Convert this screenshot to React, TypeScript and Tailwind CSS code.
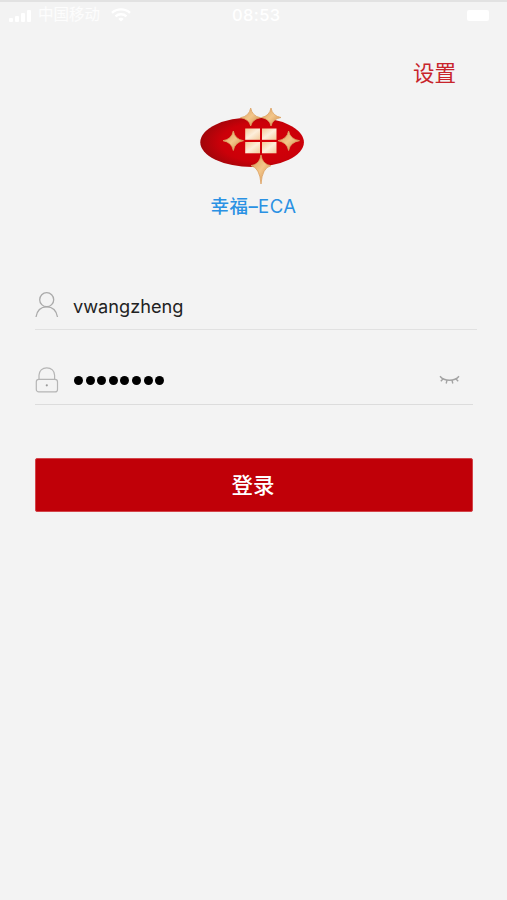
import { useState } from "react";

const signalBars = [
  { id: 1, x: 0, h: 4 },
  { id: 2, x: 6, h: 6 },
  { id: 3, x: 12, h: 9 },
  { id: 4, x: 18, h: 12 },
];

const stars = [
  { id: 1, d: "M50.7 1 Q52.2 9.2 60.5 10.7 Q52.2 12.2 50.7 19 Q49.2 12.2 40.5 10.7 Q49.2 9.2 50.7 1Z" },
  { id: 2, d: "M71 1 Q72.5 9 81 10.5 Q72.5 12 71 19 Q69.5 12 61.5 10.5 Q69.5 9 71 1Z" },
  { id: 3, d: "M33.3 24 Q34.9 32.2 43.5 33.7 Q34.9 35.2 33.3 43.5 Q31.7 35.2 23 33.7 Q31.7 32.2 33.3 24Z" },
  { id: 4, d: "M88.6 24 Q90.2 32.2 99.5 33.7 Q90.2 35.2 88.6 43.5 Q87 35.2 78 33.7 Q87 32.2 88.6 24Z" },
  { id: 5, d: "M61 48 Q62.2 57.3 71 58.7 Q62.2 60.6 61 77 Q59.8 60.6 51 58.7 Q59.8 57.3 61 48Z" },
];

function StatusBar() {
  return (
    <div className="h-8 border-t-2 border-[#e2e2e2] flex items-center pl-[9px] pr-[18px] pb-1 text-white">
      <div className="w-[223px] flex items-center">
        <svg width="23" height="13" viewBox="0 0 23 13" fill="currentColor">
          {signalBars.map((bar) => (
            <rect key={bar.id} x={bar.x} y={13 - bar.h} width="4" height={bar.h} rx="1" />
          ))}
        </svg>
        <span className="ml-1.5 text-[15.5px] leading-none text-white/80">中国移动</span>
        <svg className="ml-[11px]" width="20" height="14" viewBox="0 0 20 14" fill="none" stroke="currentColor" strokeWidth="2.4">
          <path d="M1 4.8 C6 0.2 14 0.2 19 4.8" />
          <path d="M4.5 8.3 C7.6 5.5 12.4 5.5 15.5 8.3" />
          <path d="M7.3 10.9 Q10 8.8 12.7 10.9 L10 13.6Z" fill="currentColor" stroke="none" />
        </svg>
      </div>
      <span className="text-[16.5px] leading-none tracking-[0.4px] font-medium">08:53</span>
      <div className="flex flex-1 justify-end">
        <div className="w-[22px] h-[11px] rounded-[2px] bg-white"></div>
      </div>
    </div>
  );
}

function Logo() {
  return (
    <svg width="104" height="78" viewBox="0 0 104 78">
      <defs>
        <radialGradient id="oval" cx="0.6" cy="0.5" r="0.62">
          <stop offset="0" stopColor="#d80008" />
          <stop offset="0.65" stopColor="#cb0009" />
          <stop offset="1" stopColor="#9c060a" />
        </radialGradient>
        <linearGradient id="gold" x1="0" y1="0" x2="1" y2="1">
          <stop offset="0" stopColor="#d69a58" />
          <stop offset="0.5" stopColor="#f3c68a" />
          <stop offset="1" stopColor="#c98440" />
        </linearGradient>
        <linearGradient id="pane" x1="0" y1="0" x2="1" y2="1">
          <stop offset="0" stopColor="#f3c897" />
          <stop offset="0.5" stopColor="#fdeedb" />
          <stop offset="1" stopColor="#f3cb9b" />
        </linearGradient>
      </defs>
      <ellipse cx="52.1" cy="35.2" rx="51.8" ry="24.8" fill="url(#oval)" />
      <rect x="45.2" y="21.5" width="14.8" height="11.3" fill="url(#pane)" />
      <rect x="62" y="21.5" width="14.5" height="11.3" fill="url(#pane)" />
      <rect x="45.2" y="35" width="14.8" height="11.3" fill="url(#pane)" />
      <rect x="62" y="35" width="14.5" height="11.3" fill="url(#pane)" />
      {stars.map((star) => (
        <path key={star.id} d={star.d} fill="url(#gold)" stroke="#dda263" strokeWidth="0.8" />
      ))}
    </svg>
  );
}

export default function App() {
  const [name, setName] = useState("vwangzheng");
  const [password] = useState("12345678");

  return (
    <div className="w-full h-[900px] overflow-hidden bg-[#f3f3f3] font-[Inter,'Noto_Sans_CJK_SC',sans-serif]">
      <StatusBar />

      <div className="flex justify-end pt-[25px] pr-[51px]">
        <button className="h-8 text-[21.5px] leading-8 text-[#c8242b]">设置</button>
      </div>

      <div className="flex flex-col items-center pt-[18px] pr-[3px]">
        <Logo />
        <h1 className="mt-[7px] pl-[3px] h-7 text-[18.5px] leading-7 tracking-[0.45px] font-medium text-[#2a91e3]">
          幸福–<span className="font-normal">ECA</span>
        </h1>
      </div>

      <form className="mt-[61px] pl-[35px] pr-[34px]" onSubmit={(e) => e.preventDefault()}>
        <div className="-mr-1 h-[49px] flex items-center border-b border-[#e1e1e1]">
          <svg width="24" height="26" viewBox="0 0 24 26" fill="none" stroke="#aaaaaa" strokeWidth="1.3">
            <circle cx="11.7" cy="7.7" r="7" />
            <path d="M1 25 C2 18.5 6.2 14.8 11.7 14.8 C17.2 14.8 21.4 18.5 22.5 25" />
          </svg>
          <input
            className="ml-[14px] pt-0.5 flex-1 bg-transparent outline-none text-[18.2px] leading-7 text-[#222]"
            value={name}
            onChange={(e) => setName(e.target.value)}
          />
        </div>

        <div className="mt-[25px] h-[50px] pt-px flex items-center border-b border-[#dcdcdc]">
          <svg width="24" height="26" viewBox="0 0 24 26" fill="none" stroke="#b5b5b5" strokeWidth="1.2">
            <path d="M4 12 V8.3 C4 3.8 7.3 0.8 11.8 0.8 C16.3 0.8 19.6 3.8 19.6 8.3 V12" />
            <rect x="1.3" y="12.3" width="21.2" height="12.6" rx="2.5" />
            <circle cx="11.8" cy="18.3" r="1.1" fill="#999" stroke="none" />
          </svg>
          <div className="ml-[15px] flex flex-1 gap-[2.6px]">
            {password.split("").map((_, i) => (
              <span key={i} className="size-[9px] rounded-full bg-black"></span>
            ))}
          </div>
          <svg className="mr-[13px]" width="21" height="10" viewBox="0 0 21 10" fill="none" stroke="#a3a3a3" strokeWidth="1.4">
            <path d="M1 1.2 C5.5 6.6 15.5 6.6 20 1.2" />
            <path d="M4.2 3.8 L1.8 6.2 M8 5.1 L7.2 8.5 M13 5.1 L13.8 8.5 M16.8 3.8 L19.2 6.2" />
          </svg>
        </div>

        <button className="mt-[53px] pr-0.5 w-full h-[54px] rounded-[2px] border border-[#d3444a] bg-[#c00008] text-[21.5px] leading-[52px] font-medium text-white">
          登录
        </button>
      </form>
    </div>
  );
}
